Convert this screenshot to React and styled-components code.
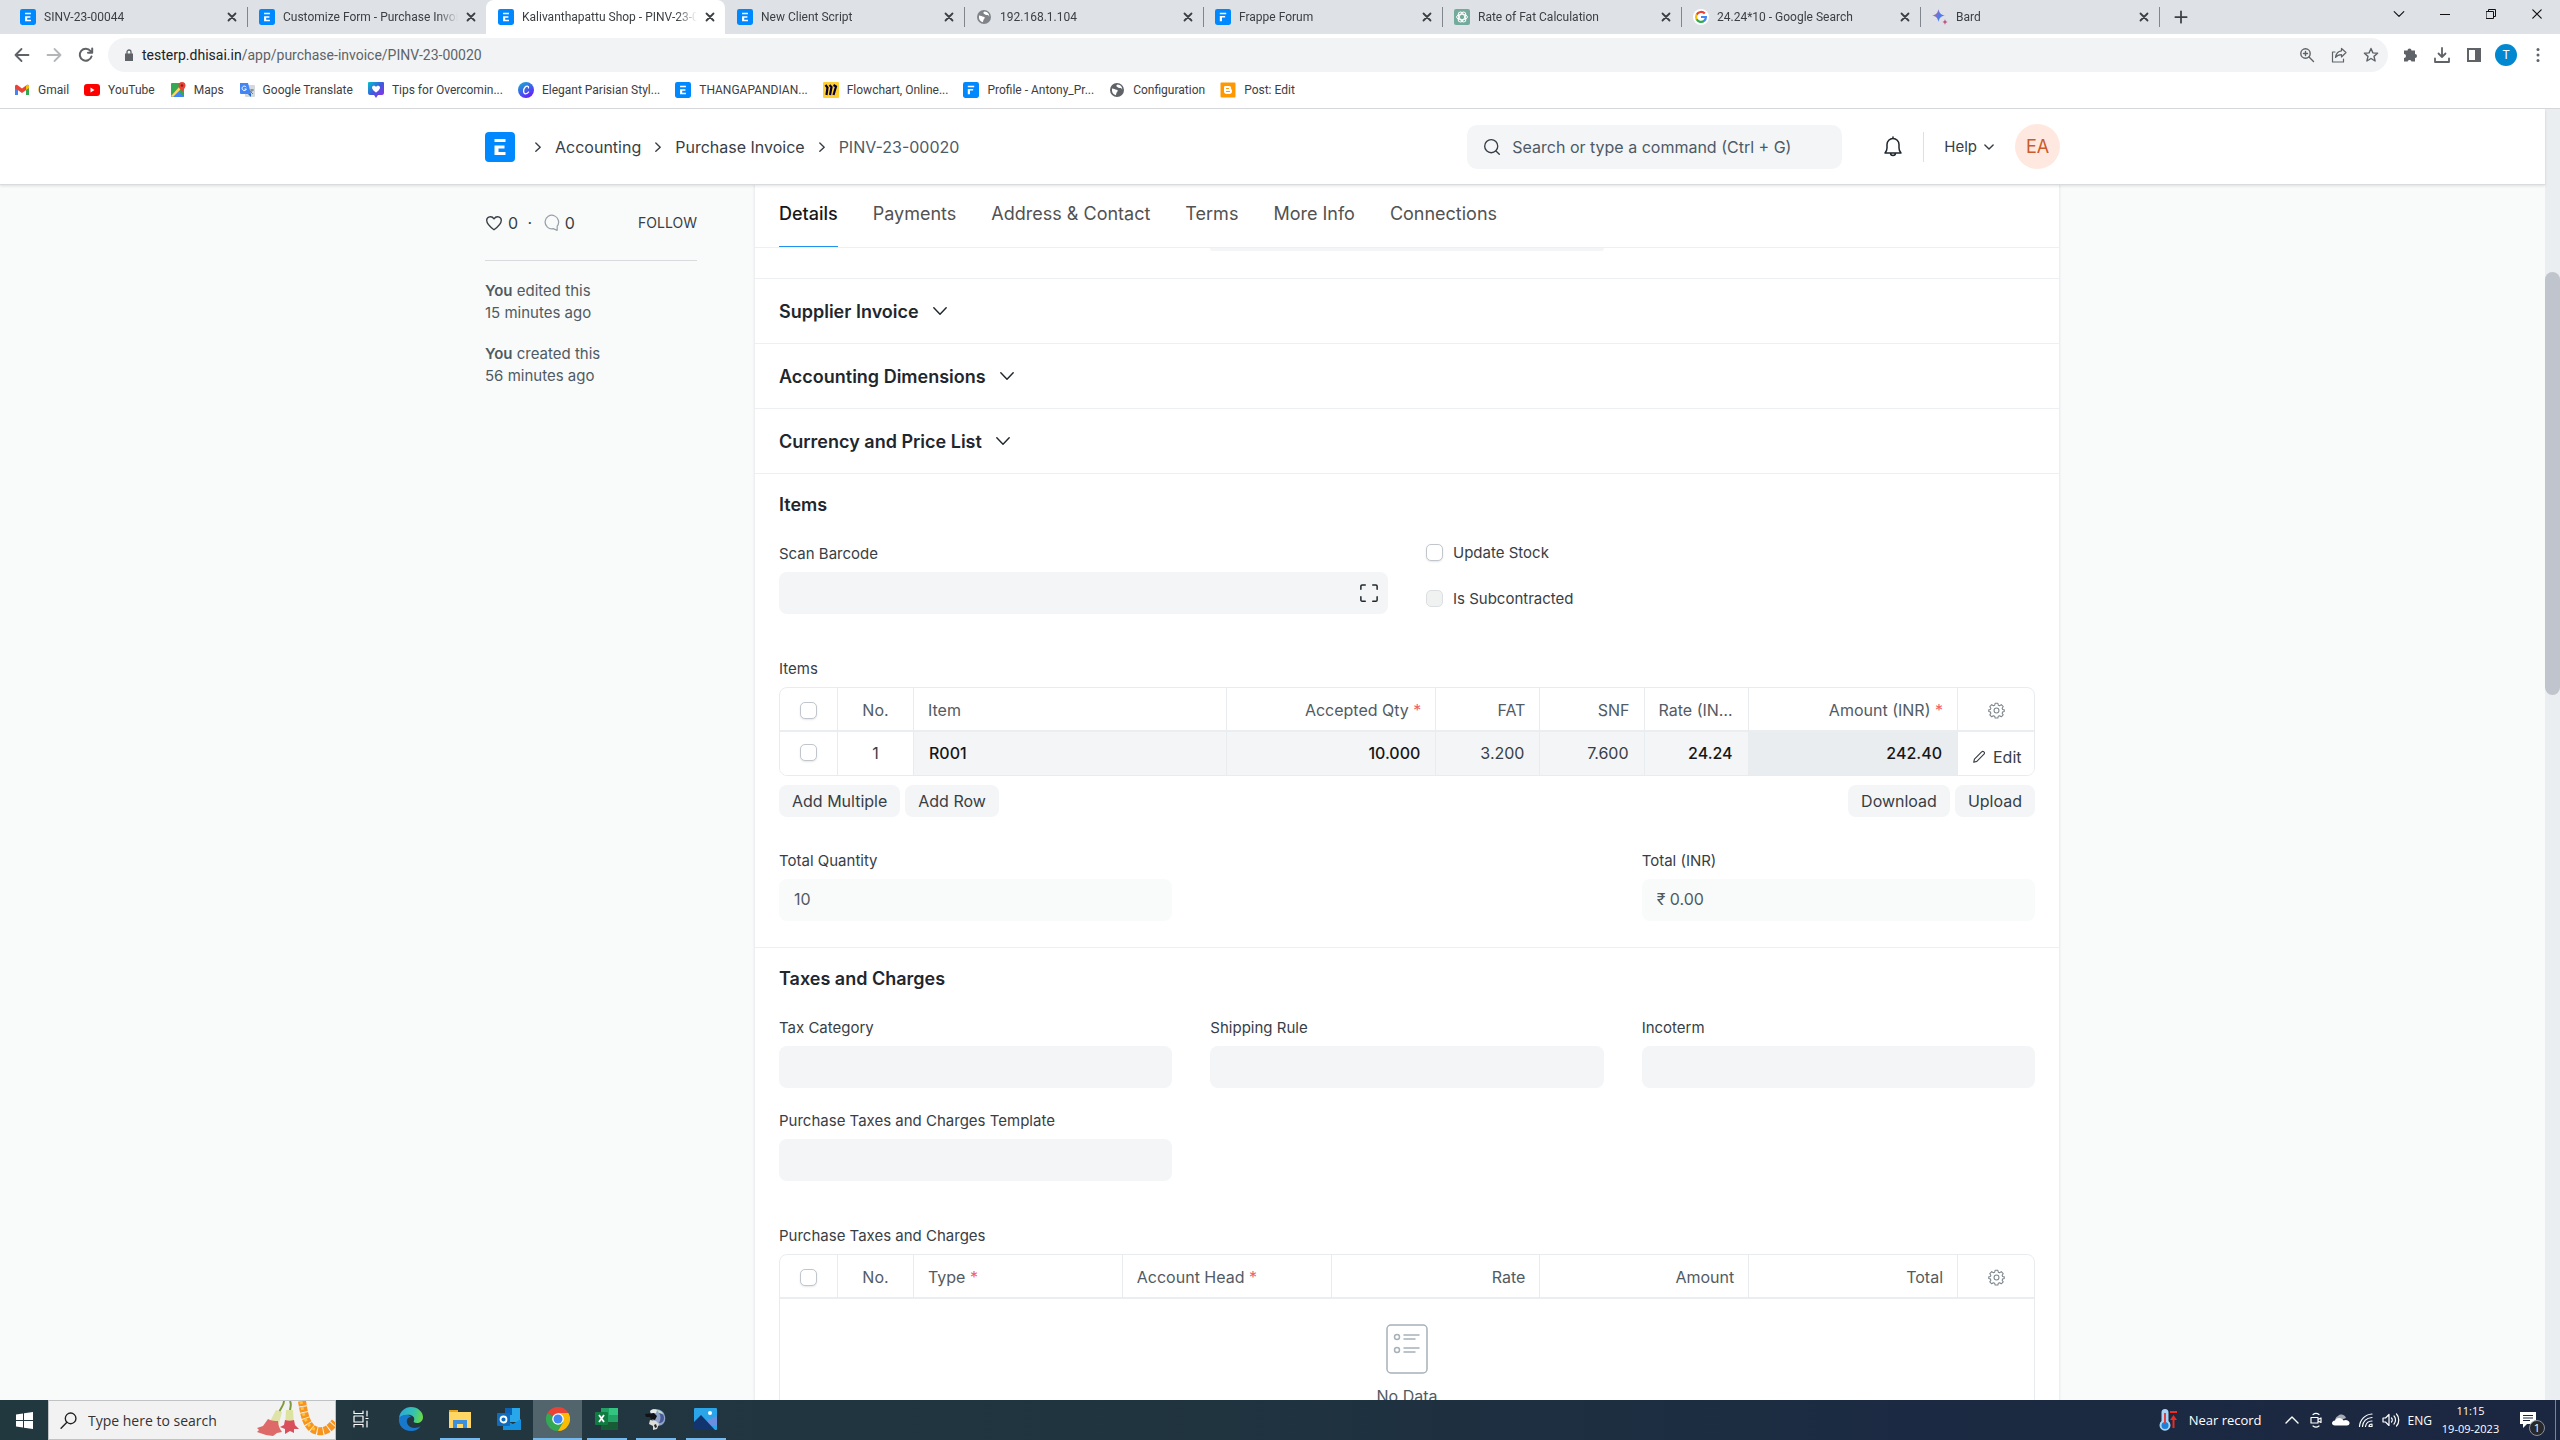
import React from "react";
import styled, { createGlobalStyle, css } from "styled-components";

const GlobalStyle = createGlobalStyle`
  *, *::before, *::after { box-sizing: border-box; }
  html, body, #root { height: 100%; }
  body {
    margin: 0;
    overflow: hidden;
    font-family: Inter, "Liberation Sans", sans-serif;
    font-size: 16px;
    color: #1f272e;
    background: #f9fafa;
  }
  button, input { font: inherit; color: inherit; }
  button { border: 0; padding: 0; background: none; }
  a { color: inherit; text-decoration: none; }
`;

const Desktop = styled.div`
  height: 100vh;
  display: flex;
  flex-direction: column;
`;

/* ---------- shared icons ---------- */

const Line = ({ size = 16, w, h, box = "0 0 16 16", stroke = 1.4, color = "currentColor", children }) => (
  <svg
    width={w || size}
    height={h || size}
    viewBox={box}
    fill="none"
    stroke={color}
    strokeWidth={stroke}
    strokeLinecap="round"
    strokeLinejoin="round"
    aria-hidden="true"
  >
    {children}
  </svg>
);

const ChevronDown = ({ size = 16, stroke = 1.3 }) => (
  <Line size={size} stroke={stroke}>
    <path d="M2.5 5.2 8 10.8l5.5-5.6" />
  </Line>
);

const ChevronRight = () => (
  <Line size={14} stroke={1.6}>
    <path d="m5.5 3.500 5 4.700-5 4.700" />
  </Line>
);

const Cross = ({ size = 10, stroke = 1.8 }) => (
  <Line size={size} box="0 0 10 10" stroke={stroke}>
    <path d="m1.500 1.500 7 7m0-7-7 7" />
  </Line>
);

const ErpIcon = ({ size = 16, frappe = false }) => (
  <svg width={size} height={size} viewBox="0 0 30 30" aria-hidden="true">
    <rect width="30" height="30" rx="4" fill="#0089ff" />
    {frappe ? (
      <path d="M9 7h12v3H9zM9 13h10v3h-6v7H9z" fill="#fff" />
    ) : (
      <path d="M9.500 7h11v3h-11zM9.500 13.500h10v3h-6v3.500h7v3h-11z" fill="#fff" />
    )}
  </svg>
);

const Globe = ({ color = "#5f6368" }) => (
  <svg width="16" height="16" viewBox="0 0 16 16" aria-hidden="true">
    <circle cx="8" cy="8" r="7" fill={color} />
    <path d="M3 6.500c2 .2 3 1 4.500 1.300 1.600.3 1.500 1.500.6 2.200-.9.600-.5 1.700-1.400 3.200C4 12.500 2.500 10 3 6.500zM8.500 2.600c-1 .8-1.700 1.400-.6 2.100 1.300.8 2.200 1.500 3.800 1.300 1 0 1.200 1 1.400 2 .6-2.500-1.500-5.400-4.600-5.400z" fill="#fff" />
  </svg>
);

const GoogleG = () => (
  <svg width="16" height="16" viewBox="0 0 16 16" fill="none" strokeWidth="2.200" aria-hidden="true">
    <circle cx="8" cy="8" r="8" fill="#fff" />
    <path d="M11.800 4.600A5 5 0 0 0 3.600 5.700" stroke="#ea4335" />
    <path d="M3.700 5.500a5 5 0 0 0 0 5" stroke="#fbbc05" />
    <path d="M3.600 10.300a5 5 0 0 0 7.700 1.400" stroke="#34a853" />
    <path d="M11.200 11.800A4.800 4.800 0 0 0 12.900 8H8" stroke="#4285f4" />
  </svg>
);

const OpenAi = () => (
  <svg width="16" height="16" viewBox="0 0 16 16" aria-hidden="true">
    <rect width="16" height="16" rx="2" fill="#74aa9c" />
    <g fill="none" stroke="#fff" strokeWidth="1">
      <ellipse cx="8" cy="8" rx="5.400" ry="2.700" />
      <ellipse cx="8" cy="8" rx="5.400" ry="2.700" transform="rotate(60 8 8)" />
      <ellipse cx="8" cy="8" rx="5.400" ry="2.700" transform="rotate(120 8 8)" />
    </g>
  </svg>
);

const BardIcon = () => (
  <svg width="16" height="16" viewBox="0 0 16 16" aria-hidden="true">
    <defs>
      <linearGradient id="bard" x1="0" y1="0" x2="1" y2="0.400">
        <stop offset="0" stopColor="#e2557a" />
        <stop offset="0.700" stopColor="#4c7df0" />
        <stop offset="1" stopColor="#4c7df0" />
      </linearGradient>
    </defs>
    <path d="M6.500 0c.7 4 2.500 5.800 6.500 6.500-4 .7-5.800 2.500-6.500 6.500C5.800 9 4 7.200 0 6.500 4 5.800 5.800 4 6.500 0z" fill="url(#bard)" />
    <path d="M13 10c.3 1.900 1.100 2.700 3 3-1.900.3-2.700 1.100-3 3-.3-1.900-1.100-2.700-3-3 1.900-.3 2.700-1.100 3-3z" fill="#c0548c" />
  </svg>
);

const GmailIcon = () => (
  <svg width="16" height="16" viewBox="0 0 16 16" aria-hidden="true">
    <path d="M1 4v9h3V7z" fill="#4285f4" />
    <path d="M15 4v9h-3V7z" fill="#34a853" />
    <path d="M1 4.500C1 2.500 3 2.500 4 3.500l4 3 4-3c1-1 3-1 3 1V6l-7 5-7-5z" fill="#ea4335" />
    <path d="M12 3.500c1-1 3-1 3 1V6l-3 2z" fill="#fbbc04" />
  </svg>
);

const YoutubeIcon = () => (
  <svg width="16" height="16" viewBox="0 0 16 16" aria-hidden="true">
    <rect y="2" width="16" height="12" rx="3" fill="#f00" />
    <path d="m6.500 5.500 4 2.500-4 2.500z" fill="#fff" />
  </svg>
);

const MapsIcon = () => (
  <svg width="16" height="16" viewBox="0 0 16 16" aria-hidden="true">
    <rect x="1" y="1" width="13" height="14" rx="1" fill="#34a853" />
    <path d="m2 15 6-7 6 7z" fill="#4285f4" />
    <path d="m1 14 9-10 2 2-9 9z" fill="#fdd663" />
    <path d="M12 0a3.500 3.500 0 0 1 3.500 3.500C15.500 6 12 9.500 12 9.500S8.500 6 8.500 3.500A3.500 3.500 0 0 1 12 0z" fill="#ea4335" />
    <circle cx="12" cy="3.500" r="1.200" fill="#8c1d18" />
  </svg>
);

const TranslateIcon = () => (
  <svg width="16" height="16" viewBox="0 0 16 16" aria-hidden="true">
    <rect x="6" y="3" width="10" height="12" rx="1" fill="#d5d8dc" />
    <path d="M1 1h8l3 11H2a1 1 0 0 1-1-1z" fill="#4285f4" />
    <path d="M7.200 5.200A2.200 2.200 0 1 0 7.400 7H5.500" fill="none" stroke="#fff" strokeWidth="1" />
    <path d="M11 8h4m-2-1v1c0 2-1 3-2 4m0-3 3 3" fill="none" stroke="#607d8b" strokeWidth="0.900" />
    <path d="m9 12 3 3v-3z" fill="#1967d2" />
  </svg>
);

const TipsIcon = () => (
  <svg width="16" height="16" viewBox="0 0 16 16" aria-hidden="true">
    <defs>
      <linearGradient id="tips" x1="0" y1="0" x2="1" y2="1">
        <stop offset="0" stopColor="#00c4cc" />
        <stop offset="0.500" stopColor="#4356e0" />
        <stop offset="1" stopColor="#a02be8" />
      </linearGradient>
    </defs>
    <path d="M1 0h14a1 1 0 0 1 1 1v10a2 2 0 0 1-2 2h-4l-2 3-2-3H2a2 2 0 0 1-2-2V1a1 1 0 0 1 1-1z" fill="url(#tips)" />
    <path d="M8 10.500S4 8 4 5.500C4 3.500 7 3 8 5c1-2 4-1.500 4 .5C12 8 8 10.500 8 10.500z" fill="#fff" />
  </svg>
);

const CanvaIcon = () => (
  <svg width="16" height="16" viewBox="0 0 16 16" aria-hidden="true">
    <defs>
      <linearGradient id="canva" x1="0" y1="0" x2="0.600" y2="1">
        <stop offset="0" stopColor="#12b5d0" />
        <stop offset="1" stopColor="#6420ff" />
      </linearGradient>
    </defs>
    <circle cx="8" cy="8" r="8" fill="url(#canva)" />
    <path d="M10.500 5.800c.3-2-2-2.300-3.500-.6C5 7.400 5 11.800 7.600 11.800c1.400 0 2.400-.8 3-1.800" fill="none" stroke="#fff" strokeWidth="1.300" strokeLinecap="round" />
  </svg>
);

const MiroIcon = () => (
  <svg width="16" height="16" viewBox="0 0 16 16" aria-hidden="true">
    <rect width="16" height="16" rx="1" fill="#ffd02f" />
    <path d="m2.500 3 2 2.500L3.500 13M6.500 3l2 2-1.500 8M10.500 3l2.500 1.500L10.500 13" fill="none" stroke="#050038" strokeWidth="2.200" />
  </svg>
);

const BloggerIcon = () => (
  <svg width="16" height="16" viewBox="0 0 16 16" aria-hidden="true">
    <rect x="0.500" y="0.500" width="15" height="15" rx="1" fill="#ff9800" />
    <path d="M5 4h4c2 0 2.500 1.500 2 3 1 .5 1 1 1 2.500C12 11 11 12 9.500 12h-3C5 12 4 11 4 9.500v-4C4 4.500 4.500 4 5 4z" fill="#fff" />
    <path d="M6.500 6.500h2M6.500 9.500h3" stroke="#ff9800" strokeWidth="1.200" strokeLinecap="round" />
  </svg>
);

/* ---------- browser window ---------- */

const chromeFont = css`
  font-family: Roboto, "Noto Sans", sans-serif;
  font-size: 12px;
  color: #3c4043;
`;

const TabStrip = styled.div`
  ${chromeFont}
  flex: none;
  height: 34px;
  display: flex;
  align-items: stretch;
  padding-left: 8px;
  background: #dee1e6;
`;

const BrowserTab = styled.div`
  flex: 0 1 239px;
  min-width: 0;
  display: flex;
  align-items: center;
  gap: 8px;
  padding: 0 10px 0 12px;
  border-radius: 8px 8px 0 0;
  background: ${(p) => (p.$active ? "#fff" : "transparent")};
`;

const TabTitle = styled.span`
  flex: 1;
  overflow: hidden;
  white-space: nowrap;
  mask-image: linear-gradient(90deg, #000 calc(100% - 20px), transparent);
`;

const TabClose = styled.button`
  display: grid;
  place-items: center;
  width: 10px;
  color: #3c4043;
`;

const TabDivider = styled.span`
  align-self: center;
  flex: none;
  width: 1px;
  height: 20px;
  margin-right: -1px;
  background: ${(p) => (p.$hidden ? "transparent" : "#80868b")};
`;

const NewTab = styled.button`
  width: 28px;
  margin-left: 8px;
  display: grid;
  place-items: center;
  color: #3c4043;
`;

const WindowControls = styled.div`
  margin-left: auto;
  display: flex;
  height: 28px;
  color: #111;
`;

const WindowButton = styled.button`
  width: 46px;
  display: grid;
  place-items: center;
`;

const Toolbar = styled.div`
  flex: none;
  height: 38px;
  display: flex;
  align-items: flex-end;
  gap: 14px;
  padding: 0 14px;
  background: #fff;
  color: #5f6368;
`;

const NavButtons = styled.div`
  display: flex;
  align-items: center;
  gap: 16px;
  height: 34px;
`;

const IconButton = styled.button`
  display: grid;
  place-items: center;
  min-width: 16px;
  min-height: 16px;
  color: ${(p) => p.$color || "inherit"};
`;

const Omnibox = styled.div`
  ${chromeFont}
  flex: 1;
  height: 34px;
  display: flex;
  align-items: center;
  gap: 9px;
  padding: 0 9px 0 17px;
  border-radius: 17px;
  background: #f1f3f4;
  color: #5f6368;
  font-size: 14px;

  b { font-weight: 400; color: #202124; }
`;

const Address = styled.span`
  flex: 1;
`;

const IconRow = styled.div`
  display: flex;
  align-items: center;
  gap: 16px;
  height: 34px;
`;

const Profile = styled.span`
  display: grid;
  place-items: center;
  width: 22px;
  height: 22px;
  margin: 0 -3px;
  border-radius: 50%;
  background: #0288d1;
  color: #fff;
  font: 12px Roboto, sans-serif;
`;

const Bookmarks = styled.nav`
  ${chromeFont}
  flex: none;
  height: 37px;
  display: flex;
  align-items: center;
  gap: 15px;
  padding-left: 14px;
  background: #fff;
  border-bottom: 1px solid #d5d7da;
`;

const Bookmark = styled.a`
  display: flex;
  align-items: center;
  gap: 8px;
  white-space: nowrap;
`;

/* ---------- application shell ---------- */

const Viewport = styled.div`
  flex: 1;
  min-height: 0;
  display: flex;
  overflow: hidden;
`;

const Page = styled.div`
  flex: 1;
  min-width: 0;
  display: flex;
  flex-direction: column;
`;

const ScrollTrack = styled.div`
  flex: none;
  width: 15px;
  padding-top: 163px;
  background: #ebeef0;
`;

const ScrollThumb = styled.div`
  height: 423px;
  border-radius: 8px;
  background: #c0c5cd;
`;

const Container = styled.div`
  width: 100%;
  max-width: 1575px;
  margin: 0 auto;
  display: flex;
`;

const Navbar = styled.header`
  flex: none;
  height: 76px;
  display: flex;
  align-items: center;
  background: #fff;
  border-bottom: 1px solid #d9dcde;
  box-shadow: 0 1px 3px rgba(0, 0, 0, 0.12);
  z-index: 1;

  ${Container} { align-items: center; }
`;

const Crumbs = styled.nav`
  display: flex;
  align-items: center;
  gap: 10px;
  flex: 1;
  color: #383e45;
`;

const CrumbLogo = styled.a`
  display: flex;
  margin-right: 6px;
`;

const Crumb = styled.a`
  color: ${(p) => (p.$last ? "#4c5a67" : "#383e45")};
`;

const SearchBox = styled.label`
  width: 375px;
  height: 44px;
  display: flex;
  align-items: center;
  gap: 11px;
  padding: 0 16px;
  border-radius: 10px;
  background: #f4f5f6;
  color: #383e45;
`;

const SearchInput = styled.input`
  flex: 1;
  min-width: 0;
  border: 0;
  outline: 0;
  padding: 0;
  background: none;
  &::placeholder { color: #4c5a67; opacity: 1; }
`;

const NavDivider = styled.span`
  width: 1px;
  height: 30px;
  background: #dce0e3;
`;

const NavTools = styled.div`
  display: flex;
  align-items: center;
  gap: 20px;
  margin-left: 41px;
`;

const HelpButton = styled.button`
  display: flex;
  align-items: center;
  gap: 6px;
  color: #383e45;
  font-size: 15px;
`;

const Avatar = styled.span`
  display: grid;
  place-items: center;
  width: 45px;
  height: 45px;
  border-radius: 50%;
  background: #ffe8df;
  color: #cb5a2c;
  font-size: 18px;
`;

const Body = styled.div`
  flex: 1;
  min-height: 0;
  display: flex;
  overflow: hidden;
`;

const Sidebar = styled.aside`
  flex: none;
  width: 212px;
  margin-right: 57px;
  color: #505a62;
  font-size: 15px;
  line-height: 22px;
`;

const SidebarStats = styled.div`
  display: flex;
  align-items: center;
  gap: 5px;
  height: 76px;
  border-bottom: 1px solid #d9dcde;
  font-size: 16px;
  color: #383e45;
`;

const Follow = styled.button`
  margin-left: auto;
  font-size: 14px;
`;

const Activity = styled.p`
  margin: 19px 0;
  b { font-weight: 600; }
`;

const Card = styled.main`
  flex: 1;
  min-width: 0;
  background: #fff;
  border: solid #edeff0;
  border-width: 0 1px;
  box-shadow: 0 0 2px rgba(0, 0, 0, 0.08);
`;

const TabBar = styled.nav`
  display: flex;
  gap: 35px;
  height: 63px;
  padding: 0 24px;
  border-bottom: 1px solid #edeff0;
`;

const TabLink = styled.a`
  height: 62px;
  padding-top: 18px;
  line-height: 22px;
  font-size: 18px;
  color: ${(p) => (p.$active ? "#171717" : "#525252")};
  font-weight: ${(p) => (p.$active ? 500 : 400)};
  border-bottom: 1px solid ${(p) => (p.$active ? "#2490ef" : "transparent")};
`;

const Section = styled.section`
  padding: 0 24px;
  border-top: 1px solid #edf0f2;
`;

const ScrolledSection = styled.section`
  height: 30px;
  padding: 0 24px;
`;

const SectionToggle = styled.button`
  width: 100%;
  height: 64px;
  display: flex;
  align-items: center;
  gap: 12px;
  font-size: 18px;
  font-weight: 600;
`;

const SectionTitle = styled.h2`
  margin: 0 0 8px;
  font-size: 18px;
  font-weight: 600;
  line-height: 62px;
`;

const Columns = styled.div`
  display: grid;
  grid-template-columns: repeat(${(p) => p.$count}, 1fr);
  gap: 23px 38px;
`;

const TotalsRow = styled(Columns).attrs({ $count: 3 })`
  padding: 34px 0 26px;
`;

const Field = styled.div`
  display: flex;
  flex-direction: column;
  gap: 8px;
`;

const Label = styled.label`
  display: block;
  font-size: 15px;
  line-height: 20px;
  color: #383e45;
`;

const InputShell = styled.div`
  height: 42px;
  display: flex;
  align-items: center;
  padding-right: 9px;
  border-radius: 8px;
  background: ${(p) => (p.$readOnly ? "#f9fafa" : "#f4f5f6")};
`;

const TextInput = styled.input`
  flex: 1;
  min-width: 0;
  height: 42px;
  padding: 0 0 3px 15px;
  border: 0;
  outline: 0;
  background: none;
  color: #505a62;
`;

const InputRemnant = styled.div`
  grid-column: 2;
  height: 3px;
  border-radius: 0 0 8px 8px;
  background: #f4f5f6;
`;

const CheckStack = styled.div`
  display: flex;
  flex-direction: column;
  gap: 29px;
`;

const CheckRow = styled.label`
  display: flex;
  align-items: center;
  gap: 10px;
  font-size: 15px;
  line-height: 16px;
  color: #383e45;
`;

const Checkbox = styled.input.attrs({ type: "checkbox" })`
  appearance: none;
  display: block;
  flex: none;
  width: 17px;
  height: 17px;
  margin: 0;
  border: 1px solid #c0c6cc;
  border-radius: 5px;
  background: #fff;
  box-shadow: 0 1px 2px rgba(0, 0, 0, 0.1);

  &:disabled {
    border-color: #dcdfe1;
    background: #f0f2f2;
    box-shadow: none;
  }
`;

const GridBlock = styled.div`
  display: flex;
  flex-direction: column;
  gap: 8px;
  padding-top: 45px;
`;

const GridFrame = styled.div`
  border: 1px solid #e9ecee;
  border-radius: 8px;
  overflow: hidden;
`;

const Grid = styled.table`
  width: 100%;
  table-layout: fixed;
  border-collapse: separate;
  border-spacing: 0;
`;

const HeadCell = styled.th`
  height: 44px;
  padding: 2px 14px 0;
  border-right: 1px solid #e9ecee;
  border-bottom: 2px solid #ebeef0;
  font-weight: 400;
  color: #525b63;
  text-align: ${(p) => p.$align || "left"};
  white-space: nowrap;
  overflow: hidden;
  text-overflow: ellipsis;

  &:last-child { border-right: 0; }
  ${Checkbox}, svg { margin: 0 auto; display: block; }
`;

const Cell = styled.td`
  height: 43px;
  padding: 0 15px 2px;
  border-right: 1px solid #e9ecee;
  background: ${(p) => p.$bg || "#fff"};
  font-weight: ${(p) => (p.$strong ? 500 : 400)};
  color: ${(p) => (p.$strong ? "#171717" : "#383e45")};
  text-align: ${(p) => p.$align || "left"};

  &:last-child { border-right: 0; padding: 6px 14px 0; }
  ${Checkbox} { margin: 0 auto; }
`;

const Required = styled.span`
  color: #f0606a;
`;

const EditButton = styled.button`
  display: flex;
  align-items: center;
  gap: 7px;
  color: #383e45;
`;

const EmptyCell = styled.td`
  height: 150px;
  padding-top: 25px;
  vertical-align: top;
  text-align: center;
  color: #525b63;

  svg { display: block; margin: 0 auto; }
`;

const EmptyText = styled.div`
  margin-top: 12px;
  line-height: 20px;
`;

const ButtonRow = styled.div`
  display: flex;
  gap: 5px;
  padding-top: 1px;
`;

const GridButton = styled.button`
  height: 32px;
  padding: 0 13px;
  border-radius: 8px;
  background: #f4f5f6;
  color: #383e45;
`;

const Spacer = styled.span`
  flex: 1;
`;

/* ---------- taskbar ---------- */

const Taskbar = styled.footer`
  flex: none;
  height: 40px;
  display: flex;
  align-items: stretch;
  background: linear-gradient(90deg, #22383f 0%, #20343f 45%, #1b2a42 75%, #1b2740 100%);
  color: #fff;
  font-family: "Open Sans", "Noto Sans", sans-serif;
`;

const StartButton = styled.button`
  width: 48px;
  display: grid;
  place-items: center;
`;

const TaskSearch = styled.label`
  width: 288px;
  display: flex;
  align-items: center;
  gap: 11px;
  padding-left: 11px;
  background: #f2f2f2;
  border: 1px solid #bfc3c5;
  color: #222;
`;

const TaskSearchInput = styled.input`
  flex: 1;
  min-width: 0;
  padding: 0;
  border: 0;
  outline: 0;
  background: none;
  font-size: 14px;
  &::placeholder { color: #333; opacity: 1; }
`;

const TaskButton = styled.button`
  width: ${(p) => (p.$wide ? 50 : 49)}px;
  display: grid;
  place-items: center;
  background: ${(p) => (p.$active ? "#52656c" : "none")};
  border-bottom: 2px solid transparent;

  ${(p) => p.$open && css`
    background-image: linear-gradient(#76b9ed, #76b9ed);
    background-repeat: no-repeat;
    background-origin: border-box;
    background-clip: border-box;
    background-position: 50% 100%;
    background-size: ${p.$active ? "100%" : "40px"} 2px;
  `}
`;

const Tray = styled.div`
  margin-left: auto;
  display: flex;
  align-items: center;
  gap: 8px;
`;

const Weather = styled.button`
  display: flex;
  align-items: center;
  gap: 12px;
  margin-right: 14px;
  font-size: 13px;
`;

const TrayText = styled.span`
  font-size: 12px;
`;

const Clock = styled.time`
  width: 61px;
  text-align: center;
  font-size: 11px;
  line-height: 18px;
  white-space: nowrap;
`;

const Notices = styled.button`
  position: relative;
  width: 38px;
  height: 40px;
  display: grid;
  place-items: center;
`;

const NoticeCount = styled.span`
  position: absolute;
  right: 2px;
  bottom: 4px;
  width: 16px;
  height: 16px;
  border: 1px solid #8a8f98;
  border-radius: 50%;
  background: #26282c;
  font-size: 11px;
  line-height: 14px;
`;

const ShowDesktop = styled.span`
  width: 5px;
  align-self: stretch;
  border-left: 1px solid #7a8494;
`;

/* ---------- data ---------- */

const browserTabs = [
  { title: "SINV-23-00044", icon: <ErpIcon /> },
  { title: "Customize Form - Purchase Invoice", icon: <ErpIcon /> },
  { title: "Kalivanthapattu Shop - PINV-23-00020", icon: <ErpIcon />, active: true },
  { title: "New Client Script", icon: <ErpIcon /> },
  { title: "192.168.1.104", icon: <Globe color="#808488" /> },
  { title: "Frappe Forum", icon: <ErpIcon frappe /> },
  { title: "Rate of Fat Calculation", icon: <OpenAi /> },
  { title: "24.24*10 - Google Search", icon: <GoogleG /> },
  { title: "Bard", icon: <BardIcon /> },
];

const bookmarks = [
  ["Gmail", <GmailIcon />],
  ["YouTube", <YoutubeIcon />],
  ["Maps", <MapsIcon />],
  ["Google Translate", <TranslateIcon />],
  ["Tips for Overcomin...", <TipsIcon />],
  ["Elegant Parisian Styl...", <CanvaIcon />],
  ["THANGAPANDIAN...", <ErpIcon />],
  ["Flowchart, Online...", <MiroIcon />],
  ["Profile - Antony_Pr...", <ErpIcon frappe />],
  ["Configuration", <Globe />],
  ["Post: Edit", <BloggerIcon />],
];

const formTabs = ["Details", "Payments", "Address & Contact", "Terms", "More Info", "Connections"];
const collapsed = ["Supplier Invoice", "Accounting Dimensions", "Currency and Price List"];

const itemColumns = [
  { label: "Item" },
  { label: "Accepted Qty", required: true, align: "right", width: "16.7%" },
  { label: "FAT", align: "right", width: "8.3%" },
  { label: "SNF", align: "right", width: "8.3%" },
  { label: "Rate (INR)", align: "right", width: "8.3%" },
  { label: "Amount (INR)", required: true, align: "right", width: "16.7%" },
];

const itemRow = [
  { text: "R001", strong: true },
  { text: "10.000", strong: true, align: "right" },
  { text: "3.200", align: "right" },
  { text: "7.600", align: "right" },
  { text: "24.24", strong: true, align: "right" },
  { text: "242.40", strong: true, align: "right", bg: "#e9edf0" },
];

const taxColumns = [
  { label: "Type", required: true },
  { label: "Account Head", required: true },
  { label: "Rate", align: "right" },
  { label: "Amount", align: "right" },
  { label: "Total", align: "right" },
];

/* ---------- composed parts ---------- */

const Gear = () => (
  <Line size={17} stroke={1} color="#7c858c">
    <circle cx="8" cy="8" r="2.300" />
    <path d="M6.700 1.200h2.600l.4 1.800 1.200.5 1.600-1 1.800 1.900-1 1.500.5 1.200 1.500.3v1.500l-1.500.4-.5 1.300 1 1.500-1.800 1.800-1.600-1-1.200.5-.4 1.700H6.700l-.4-1.700-1.300-.5-1.500 1-1.800-1.800 1-1.500-.5-1.300-1.500-.4V7.400l1.500-.3.500-1.200-1-1.500 1.800-1.900 1.500 1 1.300-.5z" />
  </Line>
);

function GridHead({ columns, id }) {
  return (
    <>
      <colgroup>
        <col width="58" />
        <col width="76" />
        {columns.map((c) => (
          <col key={c.label} width={c.width} />
        ))}
        <col width="76" />
      </colgroup>
      <thead>
        <tr>
          <HeadCell><Checkbox aria-label={`Select all ${id}`} /></HeadCell>
          <HeadCell $align="center">No.</HeadCell>
          {columns.map((c) => (
            <HeadCell key={c.label} $align={c.align}>
              {c.label}
              {c.required && <Required> *</Required>}
            </HeadCell>
          ))}
          <HeadCell><Gear /></HeadCell>
        </tr>
      </thead>
    </>
  );
}

function TextField({ id, label, value, readOnly, icon }) {
  return (
    <Field>
      <Label htmlFor={id}>{label}</Label>
      <InputShell $readOnly={readOnly}>
        <TextInput id={id} defaultValue={value} readOnly={readOnly} />
        {icon}
      </InputShell>
    </Field>
  );
}

function BrowserChrome() {
  return (
    <>
      <TabStrip>
        {browserTabs.map((t, i) => (
          <React.Fragment key={t.title}>
            <BrowserTab $active={t.active}>
              {t.icon}
              <TabTitle>{t.title}</TabTitle>
              <TabClose aria-label={`Close ${t.title}`}><Cross /></TabClose>
            </BrowserTab>
            <TabDivider $hidden={i === 1 || i === 2} />
          </React.Fragment>
        ))}
        <NewTab aria-label="New tab">
          <Line size={14} stroke={2}><path d="M8 1.500v13M1.500 8h13" /></Line>
        </NewTab>
        <WindowControls>
          <WindowButton aria-label="Search tabs"><ChevronDown size={14} /></WindowButton>
          <WindowButton aria-label="Minimize"><Line size={10} box="0 0 10 10" stroke={1}><path d="M0 5.500h10" /></Line></WindowButton>
          <WindowButton aria-label="Restore"><Line size={10} box="0 0 10 10" stroke={1}><path d="M.5 2.500h7v7h-7zM2.500 2.500v-2h7v7h-2" /></Line></WindowButton>
          <WindowButton aria-label="Close window"><Cross size={12} stroke={1} /></WindowButton>
        </WindowControls>
      </TabStrip>
      <Toolbar>
        <NavButtons>
          <IconButton aria-label="Back"><Line stroke={1.8}><path d="M14.500 8h-13m6-6-6 6 6 6" /></Line></IconButton>
          <IconButton aria-label="Forward" $color="#b4b7ba"><Line stroke={1.8}><path d="M1.500 8h13m-6-6 6 6-6 6" /></Line></IconButton>
          <IconButton aria-label="Reload"><Line stroke={2}><path d="M13.500 9.500A6 6 0 1 1 12.500 4L14 5.500M14.200 1.500v4.300H10" /></Line></IconButton>
        </NavButtons>
        <Omnibox>
          <svg width="8" height="12" viewBox="0 0 8 12" aria-hidden="true">
            <path d="M0 4.500h8V12H0z" fill="#5f6368" />
            <path d="M2 5V3a2 2 0 0 1 4 0v2" fill="none" stroke="#5f6368" strokeWidth="1.300" />
          </svg>
          <Address><b>testerp.dhisai.in</b>/app/purchase-invoice/PINV-23-00020</Address>
          <IconRow>
            <IconButton aria-label="Zoom"><Line><circle cx="6.500" cy="6.500" r="4.700" /><path d="m10 10 4.500 4.500M4.500 6.500h4M6.500 4.500v4" /></Line></IconButton>
            <IconButton aria-label="Share"><Line stroke={1.2}><path d="M4 5H1.500v10h11v-3M15 5.500 10.500 1.500v2.300C7 4.200 5 7 4.500 10.500 6 8.500 8 7.600 10.500 7.600V10z" /></Line></IconButton>
            <IconButton aria-label="Bookmark"><Line><path d="m8 1.500 1.900 4.400 4.700.4-3.600 3.100 1.100 4.600L8 11.500 3.900 14 5 9.400 1.400 6.300l4.700-.4z" /></Line></IconButton>
          </IconRow>
        </Omnibox>
        <IconRow>
          <IconButton aria-label="Extensions">
            <svg width="16" height="16" viewBox="0 0 16 16" fill="currentColor"><path d="M2 3.500h3.500a2 2 0 1 1 4 0H13V7a2 2 0 1 1 0 4v3.500H9.500a2 2 0 0 0-3.800 0H2V11a2 2 0 0 0 0-4z" /></svg>
          </IconButton>
          <IconButton aria-label="Downloads"><Line stroke={1.8}><path d="M8 1v9M4.500 6.500 8 10l3.500-3.500M1 11.500V15h14v-3.500" /></Line></IconButton>
          <IconButton aria-label="Side panel">
            <svg width="16" height="16" viewBox="0 0 16 16" fill="currentColor"><path fillRule="evenodd" d="M1 1h14v14H1zM3 3v10h6V3z" /></svg>
          </IconButton>
          <Profile>T</Profile>
          <IconButton aria-label="Menu">
            <svg width="16" height="16" viewBox="0 0 16 16" fill="currentColor"><circle cx="8" cy="2.500" r="1.500" /><circle cx="8" cy="8" r="1.500" /><circle cx="8" cy="13.500" r="1.500" /></svg>
          </IconButton>
        </IconRow>
      </Toolbar>
      <Bookmarks>
        {bookmarks.map(([name, icon]) => (
          <Bookmark key={name} href="#">{icon}{name}</Bookmark>
        ))}
      </Bookmarks>
    </>
  );
}

function AppNavbar() {
  return (
    <Navbar>
      <Container>
        <Crumbs>
          <CrumbLogo href="#" aria-label="Home"><ErpIcon size={30} /></CrumbLogo>
          <ChevronRight />
          <Crumb href="#">Accounting</Crumb>
          <ChevronRight />
          <Crumb href="#">Purchase Invoice</Crumb>
          <ChevronRight />
          <Crumb href="#" $last>PINV-23-00020</Crumb>
        </Crumbs>
        <SearchBox>
          <Line size={18} stroke={1.2}><circle cx="7.300" cy="7.300" r="5.800" /><path d="m11.500 11.500 3 3" /></Line>
          <SearchInput aria-label="Search" placeholder="Search or type a command (Ctrl + G)" />
        </SearchBox>
        <NavTools>
          <IconButton aria-label="Notifications">
            <Line w={20} h={22} box="0 0 20 22" stroke={1.5}>
              <path d="M2 17h16c-1.600-1.700-2-3-2-5V8.500a6 6 0 0 0-12 0V12c0 2-.4 3.300-2 5zM7.500 17a2.500 2.500 0 0 0 5 0M10 2.300V1" />
            </Line>
          </IconButton>
          <NavDivider />
          <HelpButton>Help <ChevronDown size={12} stroke={1.9} /></HelpButton>
          <Avatar>EA</Avatar>
        </NavTools>
      </Container>
    </Navbar>
  );
}

function FormSidebar() {
  return (
    <Sidebar>
      <SidebarStats>
        <Line size={18} stroke={1.2}><path d="M8 14C5 11.800 1.500 9 1.500 5.600 1.500 2.200 6 1.200 8 4.300c2-3.100 6.500-2.100 6.500 1.300C14.500 9 11 11.800 8 14z" /></Line>
        <span>0</span>
        <span>&nbsp;·&nbsp;</span>
        <Line size={18} stroke={1.1} color="#98a1a9"><path d="M13.500 14.500V10.800A6 6 0 1 0 10 13z" /></Line>
        <span>0</span>
        <Follow>FOLLOW</Follow>
      </SidebarStats>
      <Activity><b>You</b> edited this<br />15 minutes ago</Activity>
      <Activity><b>You</b> created this<br />56 minutes ago</Activity>
    </Sidebar>
  );
}

function InvoiceForm() {
  return (
    <Card>
      <TabBar>
        {formTabs.map((t, i) => (
          <TabLink key={t} href="#" $active={i === 0}>{t}</TabLink>
        ))}
      </TabBar>
      <ScrolledSection>
        <Columns $count={3}><InputRemnant /></Columns>
      </ScrolledSection>
      {collapsed.map((name) => (
        <Section key={name}>
          <SectionToggle>{name} <ChevronDown size={18} /></SectionToggle>
        </Section>
      ))}
      <Section>
        <SectionTitle>Items</SectionTitle>
        <Columns $count={2}>
          <TextField
            id="barcode"
            label="Scan Barcode"
            icon={
              <Line size={20} stroke={1.2}>
                <path d="M1.500 5V2.500a1 1 0 0 1 1-1H5M11 1.500h2.500a1 1 0 0 1 1 1V5M14.500 11v2.500a1 1 0 0 1-1 1H11M5 14.500H2.500a1 1 0 0 1-1-1V11" />
              </Line>
            }
          />
          <CheckStack>
            <CheckRow><Checkbox />Update Stock</CheckRow>
            <CheckRow><Checkbox disabled />Is Subcontracted</CheckRow>
          </CheckStack>
        </Columns>
        <GridBlock>
          <Label as="div">Items</Label>
          <GridFrame>
            <Grid aria-label="Items">
              <GridHead columns={itemColumns} id="items" />
              <tbody>
                <tr>
                  <Cell><Checkbox aria-label="Select row 1" /></Cell>
                  <Cell $align="center">1</Cell>
                  {itemRow.map((c) => (
                    <Cell key={c.text} $align={c.align} $strong={c.strong} $bg={c.bg || "#f4f5f6"}>{c.text}</Cell>
                  ))}
                  <Cell>
                    <EditButton>
                      <Line size={14} stroke={1.3}><path d="m2 14 .8-3.500L11 2.200a1.800 1.800 0 0 1 2.700 2.500L5.500 13z" /></Line>
                      Edit
                    </EditButton>
                  </Cell>
                </tr>
              </tbody>
            </Grid>
          </GridFrame>
          <ButtonRow>
            <GridButton>Add Multiple</GridButton>
            <GridButton>Add Row</GridButton>
            <Spacer />
            <GridButton>Download</GridButton>
            <GridButton>Upload</GridButton>
          </ButtonRow>
        </GridBlock>
        <TotalsRow>
          <TextField id="qty" label="Total Quantity" value="10" readOnly />
          <span />
          <TextField id="total" label="Total (INR)" value="₹ 0.00" readOnly />
        </TotalsRow>
      </Section>
      <Section>
        <SectionTitle>Taxes and Charges</SectionTitle>
        <Columns $count={3}>
          <TextField id="tax-category" label="Tax Category" />
          <TextField id="shipping" label="Shipping Rule" />
          <TextField id="incoterm" label="Incoterm" />
          <TextField id="template" label="Purchase Taxes and Charges Template" />
        </Columns>
        <GridBlock>
          <Label as="div">Purchase Taxes and Charges</Label>
          <GridFrame>
            <Grid aria-label="Purchase Taxes and Charges">
              <GridHead columns={taxColumns} id="taxes" />
              <tbody>
                <tr>
                  <EmptyCell colSpan={8}>
                    <Line w={42} h={50} box="0 0 42 50" stroke={1.5} color="#a6b1b9">
                      <rect x="1" y="1" width="40" height="48" rx="4" />
                      <circle cx="11" cy="13" r="2.500" />
                      <circle cx="11" cy="26" r="2.500" />
                      <path d="M18 11h15M18 15h11M18 24h15M18 28h11" />
                    </Line>
                    <EmptyText>No Data</EmptyText>
                  </EmptyCell>
                </tr>
              </tbody>
            </Grid>
          </GridFrame>
        </GridBlock>
      </Section>
    </Card>
  );
}

const taskIcons = {
  view: (
    <Line size={18} box="0 0 18 18" stroke={1.2}>
      <path d="M2 1v2.500h9V1M2 17v-2.500h9V17M2 6h9v6H2zM15 1v5M15 11v6M14 8.500h2" />
    </Line>
  ),
  edge: (
    <svg width="26" height="26" viewBox="0 0 26 26">
      <defs>
        <linearGradient id="edge" x1="0" y1="0.200" x2="1" y2="0.400">
          <stop offset="0" stopColor="#2aa8e0" />
          <stop offset="0.600" stopColor="#35c1b1" />
          <stop offset="1" stopColor="#66d84a" />
        </linearGradient>
      </defs>
      <path d="M1 12C2 5 7 1 13 1c7 0 12 5 12 10 0 4-3 6-6 6-3 0-4-1-3-2.500C18 9 9 6 1 12z" fill="url(#edge)" />
      <path d="M1 12c4-4 10-4 12-1-4 0-5 4-3.500 7 2 4 8 5.500 13 2-2 4-6 5-9.500 5C5 25 0 19 1 12z" fill="#1878cc" />
    </svg>
  ),
  folder: (
    <svg width="24" height="24" viewBox="0 0 24 24">
      <path d="M1 3h9v4H1z" fill="#e9a41c" />
      <path d="M1 5h22v16H1z" fill="#ffd663" />
      <path d="M5 21v-8h14v8h-4v-4H9v4z" fill="#3b8fdd" />
    </svg>
  ),
  outlook: (
    <svg width="26" height="24" viewBox="0 0 26 24">
      <path d="M9 1h15v14H9z" fill="#28a8ea" />
      <path d="M9 1h7v7H9z" fill="#0a63b5" />
      <path d="M7 12l10 5 8-5v11H7z" fill="#1490df" />
      <rect x="1" y="6" width="13" height="13" rx="1" fill="#0f6cbd" />
      <circle cx="7.500" cy="12.500" r="3" fill="none" stroke="#fff" strokeWidth="1.800" />
    </svg>
  ),
  chrome: (
    <svg width="24" height="24" viewBox="0 0 24 24">
      <path d="M12 12 1.600 6A12 12 0 0 1 22.400 6z" fill="#ea4335" />
      <path d="M12 12l5.200 3L12 24A12 12 0 0 1 1.600 6z" fill="#34a853" />
      <path d="M12 12V6h10.400A12 12 0 0 1 12 24l5.200-9z" fill="#fbbc05" />
      <circle cx="12" cy="12" r="5.800" fill="#fff" />
      <circle cx="12" cy="12" r="4.500" fill="#4285f4" />
    </svg>
  ),
  excel: (
    <svg width="24" height="24" viewBox="0 0 24 24">
      <path d="M6 1h17v22H6z" fill="#21a366" />
      <path d="M14 1h9v7h-9z" fill="#33c481" />
      <path d="M14 15h9v8H6v-8z" fill="#185c37" />
      <rect y="5" width="13" height="13" rx="1" fill="#107c41" />
      <path d="m4 8 5 7M9 8l-5 7" stroke="#fff" strokeWidth="1.800" />
    </svg>
  ),
  remote: (
    <svg width="22" height="22" viewBox="0 0 22 22">
      <path d="M6 2c4-2 9-1 12 2 3 4 3 9 0 12-2 2-5 2-7 1L5 8z" fill="#8fa3c8" />
      <path d="M14 5c3 0 5 2 5 5s-2 5-5 5c2-4 2-7 0-10z" fill="#4a5a96" />
      <path d="M12 2c2 0 5 1 6 4l-4-1z" fill="#b8e0c8" />
      <path d="M5 3c2-2 5-2 7-1l-1 3-5 1z" fill="#e6ebe8" />
      <path d="M0 6l9-1 3 3-2 4-4-1-1-2H1z" fill="#0f1216" />
      <path d="M5 12l6 1 3 3-2 5-4 1 0-4-4-2z" fill="#dedbd7" />
      <path d="M9 17l2-1 1 3-2 1z" fill="#22252a" />
    </svg>
  ),
  photos: (
    <svg width="23" height="22" viewBox="0 0 23 22">
      <rect width="23" height="22" rx="1" fill="#2aa5e8" />
      <path d="m14 12 9-4v10h-9z" fill="#6a8fe0" />
      <path d="m0 14 7-7 14 15H0z" fill="#12356f" />
      <circle cx="16" cy="5" r="2" fill="#fff" />
    </svg>
  ),
};

const Flowers = () => (
  <svg width="80" height="38" viewBox="0 0 80 38" aria-hidden="true">
    <path d="M29 0c0 5-4 7-5 12M35 0c2 4 0 6 0 10" stroke="#7f9a3c" strokeWidth="2" fill="none" />
    <path d="m21 9 6 2-4 15-10-2z" fill="#dfe3a8" />
    <path d="m31 9 7 0 1 16-9 0z" fill="#dce3a0" />
    <path d="M13 18c4 2 7 2 10 2 0 5 2 8 4 11l-5 1-4 3-7-1-9-3 2-2-2-2 6-2z" fill="#dd6a68" />
    <path d="M30 19c3 1 6 1 9 0l1 5 4 4-5 0 0 4-4-2-5 3 0-5-5-2 4-2z" fill="#d94f5c" />
    <path d="M47 0c2 12 4 28 16 30 8 1 12-3 17-9" stroke="#f7941e" strokeWidth="8" strokeDasharray="5 1" fill="none" />
    <path d="M46 0c2 12 4 27 17 29" stroke="#ffc23a" strokeWidth="3" strokeDasharray="3 3" fill="none" />
  </svg>
);

const Gap = styled.span`
  width: 1px;
`;

function WindowsTaskbar() {
  return (
    <Taskbar>
      <StartButton aria-label="Start">
        <svg width="17" height="17" viewBox="0 0 17 17" fill="#fff"><path d="M0 2.400 7 1.400V8H0zM8 1.300 17 0v8H8zM0 9h7v6.600l-7-1zM8 9h9v8l-9-1.300z" /></svg>
      </StartButton>
      <TaskSearch>
        <Line size={17} stroke={1.3}><circle cx="10" cy="6" r="5" /><path d="M6.500 9.700 1 15.300" /></Line>
        <TaskSearchInput aria-label="Search" placeholder="Type here to search" />
        <Flowers />
      </TaskSearch>
      <TaskButton aria-label="Task view">{taskIcons.view}</TaskButton>
      <Gap />
      <TaskButton aria-label="Edge">{taskIcons.edge}</TaskButton>
      <TaskButton aria-label="Files" $open>{taskIcons.folder}</TaskButton>
      <TaskButton aria-label="Outlook">{taskIcons.outlook}</TaskButton>
      <TaskButton aria-label="Chrome" $open $active>{taskIcons.chrome}</TaskButton>
      <TaskButton aria-label="Excel" $open>{taskIcons.excel}</TaskButton>
      <TaskButton aria-label="Remote" $open $wide>{taskIcons.remote}</TaskButton>
      <TaskButton aria-label="Photos" $open>{taskIcons.photos}</TaskButton>
      <Tray>
        <Weather>
          <svg width="18" height="24" viewBox="0 0 18 24" aria-hidden="true">
            <path d="M6 1a3.500 3.500 0 0 1 3.500 3.500V13a5.500 5.500 0 1 1-7 0V4.500A3.500 3.500 0 0 1 6 1z" fill="#a9d4f5" />
            <circle cx="6" cy="17.500" r="3.500" fill="#1f7fd6" />
            <path d="M5 5h2v11H5z" fill="#e04040" />
            <path d="M11 3h7v2h-7zM14.500 7l3.500 5h-2.500v8h-2v-8H11z" fill="#f02a20" />
          </svg>
          Near record
        </Weather>
        <Line size={16}><path d="m2 11 6-6 6 6" /></Line>
        <Line size={16} stroke={1.2}><path d="M3 5.500h7v5.500H3zM10 7.500l3-1.500v4.500l-3-1.500M5 2.500c2-1.500 4-1.500 6 0M5 14c2 1.500 4 1.500 6 0" /></Line>
        <svg width="18" height="12" viewBox="0 0 18 12" aria-hidden="true">
          <path d="M4 8a4 4 0 0 1 2-6c3-3 7-1 8 2z" fill="#a5abb5" />
          <path d="M3 11.500c-4 0-4-4.500 0-5 2-3.500 7-3 8.500 0 3-1.500 6.500.5 6 3-.3 1.300-1 2-2.500 2z" fill="#fff" />
        </svg>
        <Line size={16} stroke={1.2}><path d="M1.500 14.500C2 7.500 7 2.500 14 2M4.500 14.500C5 9.500 8.500 6 14 5.500M7.500 14.500C8 11.500 10.500 9 14 9M11 14.500c0-1.500 1.500-2.500 3-2.500v2.500z" /></Line>
        <Line w={18} h={16} box="0 0 18 16" stroke={1.2}><path d="M1 6h2.500L7 2.500v11L3.500 10H1zM9.500 6c1 1 1 3 0 4M12 4c2 2 2 6 0 8M14.500 2c3 3 3 9 0 12" /></Line>
        <TrayText>ENG</TrayText>
        <Clock>11:15<br />19-09-2023</Clock>
        <Notices aria-label="Notifications">
          <svg width="16" height="16" viewBox="0 0 16 16" fill="#fff"><path fillRule="evenodd" d="M0 0h16v12H7l-4 4v-4H0zM3 3v1h10V3zM3 5.500v1h10v-1zM3 8v1h7V8z" /></svg>
          <NoticeCount>1</NoticeCount>
        </Notices>
        <ShowDesktop />
      </Tray>
    </Taskbar>
  );
}

export default function App() {
  return (
    <Desktop>
      <GlobalStyle />
      <BrowserChrome />
      <Viewport>
        <Page>
          <AppNavbar />
          <Body>
            <Container>
              <FormSidebar />
              <InvoiceForm />
            </Container>
          </Body>
        </Page>
        <ScrollTrack><ScrollThumb /></ScrollTrack>
      </Viewport>
      <WindowsTaskbar />
    </Desktop>
  );
}
